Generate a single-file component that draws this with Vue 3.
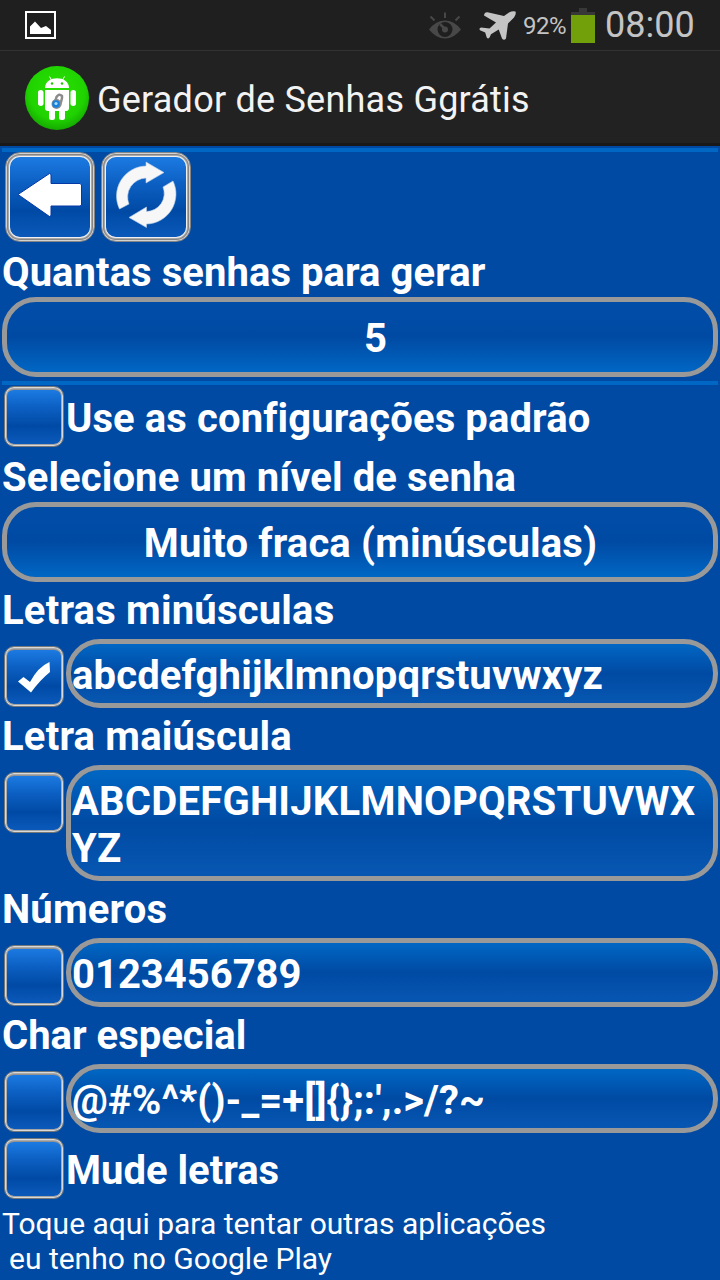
<template>
  <div class="screen">
    <!-- Status bar -->
    <div class="status-bar">
      <svg class="picture-icon" width="31" height="28" viewBox="0 0 31 28">
        <rect x="1" y="1" width="29" height="26" fill="none" stroke="#fff" stroke-width="2" />
        <path d="M5 23V15.500L10 10.500L16 17L21 15L26 19V23Z" fill="#fff" />
      </svg>
      <div class="status-right">
        <svg class="eye-icon" width="34" height="28" viewBox="0 0 34 28">
          <path d="M1 17.500Q8 8.500 17 8.500T33 17.500Q26 26.500 17 26.500T1 17.500Z" fill="#484848" />
          <circle cx="17" cy="17.500" r="7.500" fill="#1f1f1f" />
          <path d="M12 12L17 17" stroke="#484848" stroke-width="2.500" />
          <circle cx="17" cy="17.500" r="3" fill="#484848" />
          <path d="M17 .5V6M2.500 4.500L6.500 8.500M31.500 4.500L27.500 8.500" stroke="#484848" stroke-width="2" />
        </svg>
        <svg class="plane-icon" width="37" height="30" viewBox="0 0 37 30">
          <path d="M36.500 .5Q33.500 -.5 30 1.500L25 5L8.500 1.300Q5.500 1 5 4.500L17 11.500L10.500 17.500L2 16.500Q-.5 17.500 1 19.200L6.200 21.500L7.700 26.500Q9.500 28.500 10.800 26L12 23.300L19.700 18.500L23 27.500Q25 30 27 27.500L29 12.500L35 6.500Q37.500 3 36.500 .5Z" fill="#c4c4c4" />
        </svg>
        <span class="percent">92%</span>
        <div class="battery"></div>
        <span class="clock">08:00</span>
      </div>
    </div>

    <!-- Action bar -->
    <div class="action-bar">
      <svg class="app-icon" width="64" height="64" viewBox="0 0 64 64">
        <defs>
          <radialGradient id="green" cx=".5" cy=".4" r=".62">
            <stop offset="0" stop-color="#2ae000" />
            <stop offset=".7" stop-color="#20d300" />
            <stop offset="1" stop-color="#13a500" />
          </radialGradient>
        </defs>
        <circle cx="32" cy="32" r="32" fill="url(#green)" />
        <g fill="#fff">
          <path d="M20 22C20 9 44 9 44 22Z" />
          <path d="M20 24H44V42Q44 45 41 45H23Q20 45 20 42Z" />
          <rect x="13" y="24" width="5.500" height="16" rx="2.750" />
          <rect x="45.500" y="24" width="5.500" height="16" rx="2.750" />
          <rect x="24" y="40" width="6" height="14" rx="2.500" />
          <rect x="34" y="40" width="6" height="14" rx="2.500" />
        </g>
        <path d="M24.500 10.500L27 15M39.500 10.500L37 15" stroke="#fff" stroke-width="1" />
        <circle cx="27" cy="17.500" r="1.200" fill="#20c800" />
        <circle cx="37" cy="17.500" r="1.200" fill="#20c800" />
        <path d="M30 36L31.500 31Q34 27 37 30Q37.500 32 35 39" fill="none" stroke="#8c8c8c" stroke-width="2.500" />
        <circle cx="31.500" cy="38" r="5" fill="#8d8d8d" />
        <circle cx="31" cy="38" r="3.800" fill="#1880dc" />
        <circle cx="31" cy="37.500" r="1.600" fill="#a7dbff" />
      </svg>
      <h1 class="title">Gerador de Senhas Ggrátis</h1>
    </div>

    <div class="content">
      <div class="divider"></div>
      <div class="toolbar">
        <button class="chrome tool">
          <svg width="90" height="90" viewBox="0 0 90 90">
            <path d="M13 42.500L44.500 21.500L46 22.500V31.500H75L76.500 33V53L75 54H46V63.500L44.500 64.500Z" fill="#fff" stroke="#0639a8" stroke-width="1" />
          </svg>
        </button>
        <button class="chrome tool">
          <svg width="90" height="90" viewBox="0 0 90 90">
            <g fill="#f7f7f7" stroke="#b9cfe9" stroke-width=".6">
              <path d="M18.500 57A30 30 0 0 1 45 14V10L63 20.500L45 31V26A19 19 0 0 0 28 52Z" />
              <path d="M72 29A30 30 0 0 1 45.500 72V75.500L28 65.500L45.500 55V59.500A18 18 0 0 0 62 35Z" />
            </g>
          </svg>
        </button>
      </div>

      <div class="label quantity-label">Quantas senhas para gerar</div>
      <div class="field select quantity"><span>5</span></div>
      <div class="divider lower"></div>

      <div class="check-row">
        <button class="chrome check"></button>
        <div class="label defaults">Use as configurações padrão</div>
      </div>
      <div class="label level-label">Selecione um nível de senha</div>
      <div class="field select level"><span>Muito fraca (minúsculas)</span></div>

      <div v-for="group in groups" :key="group.name" class="group" :class="group.name">
        <div class="label">{{ group.label }}</div>
        <div class="group-row">
          <button class="chrome check" @click="group.checked = !group.checked">
            <svg v-if="group.checked" width="60" height="60" viewBox="0 0 60 60">
              <path d="M14 34.500L19.500 30L26 35Q34 20 45.500 15L46 25Q36 33 27 45.500Z" fill="#fff" />
            </svg>
          </button>
          <div class="field chars">{{ group.chars }}</div>
        </div>
      </div>

      <div class="check-row shuffle-row">
        <button class="chrome check"></button>
        <div class="label shuffle">Mude letras</div>
      </div>
      <div class="promo">
        <div class="promo-first">Toque aqui para tentar outras aplicações</div>
        <div class="promo-second">eu tenho no Google Play</div>
      </div>
    </div>
  </div>
</template>

<script setup>
import { ref } from 'vue';

const groups = ref([
  { name: 'lower-case', label: 'Letras minúsculas', chars: 'abcdefghijklmnopqrstuvwxyz', checked: true },
  { name: 'upper-case', label: 'Letra maiúscula', chars: 'ABCDEFGHIJKLMNOPQRSTUVWX\nYZ', checked: false },
  { name: 'digits', label: 'Números', chars: '0123456789', checked: false },
  { name: 'special', label: 'Char especial', chars: "@#%^*()-_=+[]{};:',.>/?~", checked: false }
]);
</script>

<style>
body {
  margin: 0;
  background: #004aa3;
}
</style>

<style scoped>
.screen {
  width: 720px;
  height: 1280px;
  overflow: hidden;
  background: #004aa3;
  color: #fff;
  font-family: Roboto, "Noto Sans", sans-serif;
}

.status-bar {
  box-sizing: border-box;
  height: 51px;
  border-bottom: 1px solid #333;
  background: #1f1f1f;
  padding: 0 27px 0 25px;
  display: flex;
  align-items: flex-start;
  justify-content: space-between;
  color: #c4c4c4;
}

.picture-icon {
  margin-top: 11px;
}

.status-right {
  display: flex;
  align-items: flex-start;
}

.eye-icon {
  margin: 12px 17px 0 0;
}

.plane-icon {
  margin: 11px 7px 0 0;
}

.percent {
  width: 48px;
  font-size: 24px;
  line-height: 28px;
  letter-spacing: -0.5px;
  margin-top: 12px;
}

.battery {
  width: 24px;
  height: 28px;
  margin: 15px 10px 0 0;
  background: #71a00a;
  position: relative;
  box-shadow: 0 -3px 0 #383838;
}

.battery::before {
  content: '';
  position: absolute;
  left: 8px;
  top: -7px;
  width: 8px;
  height: 4px;
  background: #383838;
}

.clock {
  width: 88px;
  font-size: 36px;
  line-height: 42px;
  margin-top: 4px;
  white-space: nowrap;
}

.action-bar {
  box-sizing: border-box;
  height: 95px;
  border-bottom: 3px solid #191919;
  background: #222;
  display: flex;
  align-items: center;
  padding: 4px 0 0 25px;
}

.app-icon {
  margin-top: -3px;
}

.title {
  margin: 2px 0 0 8px;
  font-size: 36px;
  line-height: 42px;
  font-weight: 400;
  letter-spacing: 0.23px;
  color: #f3f3f3;
  white-space: nowrap;
}

.content {
  padding: 2px 2px 0;
}

.divider {
  height: 4px;
  background: #0067c4;
}

.divider.lower {
  margin: 4px 0 2px;
}

.toolbar {
  display: flex;
  gap: 6px;
  height: 97px;
  padding-left: 3px;
}

.chrome {
  box-sizing: border-box;
  flex: none;
  width: 60px;
  height: 61px;
  padding: 0;
  border: 1px solid #747879;
  border-radius: 10px;
  background: linear-gradient(#1c7be3 4%, #0c5fc2 35%, #004aa5 66%, #0c5bbd);
  box-shadow: inset 0 0 0 1px #d9d9d9, inset 0 -1px 0 1px #a4a4a4, inset 0 0 0 2px #aaa, inset 0 3px 0 #929292;
}

.check {
  margin-top: -1px;
}

.chrome svg {
  display: block;
  margin: -1px;
}

.tool {
  width: 90px;
  height: 90px;
  border-radius: 15px;
  border-color: #858585;
  box-shadow: inset 0 0 0 1px #d2d2d2, inset 0 0 0 2px #858585, inset 0 0 0 3px #aaa, inset 0 0 0 4px #f0f0f0;
}

.label {
  height: 47px;
  font-size: 40px;
  line-height: 47px;
  font-weight: 700;
  white-space: nowrap;
}

.quantity-label {
  letter-spacing: 0.06px;
}

.defaults,
.level-label {
  letter-spacing: 0.1px;
}

.field {
  box-sizing: border-box;
  border: 5px solid #999;
  border-radius: 34px;
  font-size: 40px;
  line-height: 47px;
  font-weight: 700;
}

.select {
  height: 80px;
  margin-top: 1px;
  padding: 13px 0 0 21px;
  text-align: center;
  background: linear-gradient(#004da8, #004aa3 50%, #0067c4) padding-box;
}

.quantity {
  padding-left: 31px;
}

.level {
  letter-spacing: 0.15px;
}

.check-row {
  display: flex;
  height: 67px;
  padding-left: 2px;
}

.check-row .label {
  margin: 8px 0 0 2px;
}

.group {
  padding-top: 5px;
}

.group-row {
  display: flex;
  align-items: flex-start;
  padding: 5px 0 0 2px;
}

.group-row .check {
  margin-top: 7px;
}

.chars {
  flex: 1;
  margin-left: 2px;
  padding: 8px 0 4px 1px;
  white-space: pre;
  background: linear-gradient(#0067c4, #004aa3 50%, #0757b2) padding-box;
}

.lower-case .label,
.upper-case .label {
  letter-spacing: 0.2px;
}

.lower-case .chars {
  letter-spacing: 0.15px;
}

.upper-case .chars {
  letter-spacing: 0.23px;
}

.digits .label {
  letter-spacing: 0.15px;
}

.special .chars {
  letter-spacing: 0.1px;
}

.shuffle-row {
  padding-top: 6px;
}

.promo {
  font-size: 30px;
  line-height: 35px;
  white-space: nowrap;
}

.promo-second {
  padding-left: 7px;
}
</style>
